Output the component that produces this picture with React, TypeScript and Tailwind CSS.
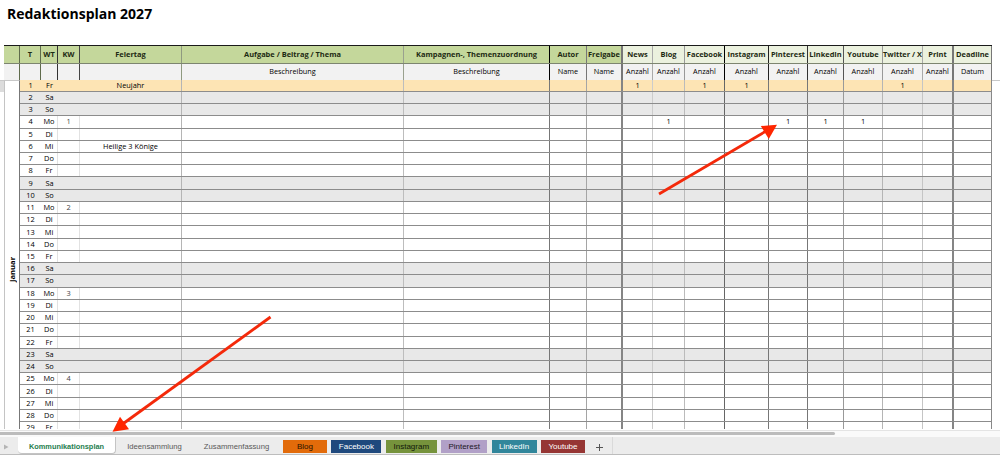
import clsx from 'clsx'

const COLS =
  'grid grid-cols-[16px_21px_17px_22px_102px_222px_146px_37px_36px_30px_32px_40px_44px_39px_36px_39px_40px_31px_38px]'
const DAY_COLS =
  'grid grid-cols-[21px_17px_22px_102px_222px_146px_37px_36px_30px_32px_40px_44px_39px_36px_39px_40px_31px_38px]'

const columns = [
  { title: '', sub: '', tone: 'green', head: 'border-r border-[#5f6b4c]', line: '' },
  { title: 'T', sub: '', tone: 'green', head: 'border-r border-[#5f6b4c]', line: '' },
  { title: 'WT', sub: '', tone: 'green', head: 'border-r border-[#333]', line: 'border-r border-[#e2e2e2]' },
  { title: 'KW', sub: '', tone: 'green', head: 'border-r border-[#444]', line: 'border-r border-[#e2e2e2]' },
  { title: 'Feiertag', sub: '', tone: 'green', head: 'border-r border-[#8f9a80]', line: 'border-r border-[#b5b5b5]' },
  { title: 'Aufgabe / Beitrag / Thema', sub: 'Beschreibung', tone: 'green', head: 'border-r border-[#9aa18f]', line: 'border-r border-[#bdbdbd]' },
  { title: 'Kampagnen-, Themenzuordnung', sub: 'Beschreibung', tone: 'green', head: 'border-r border-black', line: 'border-r border-[#777]' },
  { title: 'Autor', sub: 'Name', tone: 'green', head: 'border-r border-[#777]', line: 'border-r border-[#a5a5a5]' },
  { title: 'Freigabe', sub: 'Name', tone: 'green', head: 'border-r-2 border-[#777]', line: 'border-r-2 border-[#858585]' },
  { title: 'News', sub: 'Anzahl', tone: 'pale', head: 'border-r border-[#aaa]', line: 'border-r border-[#ccc]' },
  { title: 'Blog', sub: 'Anzahl', tone: 'pale', head: 'border-r border-[#999]', line: 'border-r border-[#bbb]' },
  { title: 'Facebook', sub: 'Anzahl', tone: 'pale', head: 'border-r border-black', line: 'border-r border-[#666]' },
  { title: 'Instagram', sub: 'Anzahl', tone: 'pale', head: 'border-r border-[#222]', line: 'border-r border-[#777]' },
  { title: 'Pinterest', sub: 'Anzahl', tone: 'pale', head: 'border-r border-[#333]', line: 'border-r border-[#777]' },
  { title: 'LinkedIn', sub: 'Anzahl', tone: 'pale', head: 'border-r border-[#555]', line: 'border-r border-[#999]' },
  { title: 'Youtube', sub: 'Anzahl', tone: 'pale', head: 'border-r border-[#999]', line: 'border-r border-[#b5b5b5]' },
  { title: 'Twitter / X', sub: 'Anzahl', tone: 'pale', head: 'border-r border-[#aaa]', line: 'border-r border-[#c5c5c5]' },
  { title: 'Print', sub: 'Anzahl', tone: 'pale', head: 'border-r-2 border-[#777]', line: 'border-r-2 border-[#858585]' },
  { title: 'Deadline', sub: 'Datum', tone: 'pale', head: 'border-r border-[#777]', line: 'border-r border-[#888]' },
]

const weekdays = ['Fr', 'Sa', 'So', 'Mo', 'Di', 'Mi', 'Do']

// Einträge pro Tag, Schlüssel = Spaltentitel
const entries: Record<number, Record<string, string>> = {
  1: { Feiertag: 'Neujahr', News: '1', Facebook: '1', Instagram: '1', 'Twitter / X': '1' },
  4: { Blog: '1', Pinterest: '1', LinkedIn: '1', Youtube: '1' },
  6: { Feiertag: 'Heilige 3 Könige' },
}

const days = Array.from({ length: 29 }, (_, i) => {
  const day = i + 1
  const wt = weekdays[i % 7]
  return {
    day,
    wt,
    kw: wt === 'Mo' ? String((day - 4) / 7 + 1) : '',
    weekend: wt === 'Sa' || wt === 'So',
    holiday: day === 1,
  }
})

const colorTabs = [
  { name: 'Blog', style: 'w-[44px] bg-[#e26b0a] text-[#2a1200]' },
  { name: 'Facebook', style: 'w-[50px] bg-[#1f497d] text-white' },
  { name: 'Instagram', style: 'w-[51px] bg-[#76933c] text-[#10180a]' },
  { name: 'Pinterest', style: 'w-[46px] bg-[#b1a0c7] text-[#1c1626]' },
  { name: 'LinkedIn', style: 'w-[45px] bg-[#31869b] text-white' },
  { name: 'Youtube', style: 'w-[44px] bg-[#963634] text-white' },
]

function HeaderRows() {
  return (
    <>
      <div className={clsx(COLS, 'h-[19px] border-t border-b border-t-[#1a1a1a] border-b-[#7d8570]')}>
        {columns.map((col, i) => (
          <div
            key={i}
            className={clsx(
              'flex items-center justify-center whitespace-nowrap font-bold text-[7.45px] text-[#1d2a12]',
              col.tone === 'green' ? 'bg-[#c4d79b]' : 'bg-[#ebf1de]',
              col.head
            )}
          >
            {col.title}
          </div>
        ))}
      </div>
      <div className={clsx(COLS, 'h-[15.6px] bg-[#f2f2f2]')}>
        {columns.map((col, i) => (
          <div key={i} className={clsx('flex items-center justify-center whitespace-nowrap text-[7.3px]', col.head)}>
            {col.sub}
          </div>
        ))}
      </div>
    </>
  )
}

function DayRow({ item }: { item: (typeof days)[number] }) {
  const filled = item.weekend || item.holiday
  return (
    <div
      className={clsx(
        DAY_COLS,
        'h-[12.24px] border-b border-[#8c8c8c]',
        item.holiday && 'bg-[#fde4b4]',
        item.weekend && 'bg-[#e8e8e8]'
      )}
    >
      {columns.slice(1).map((col) => {
        let text = entries[item.day]?.[col.title] ?? ''
        if (col.title === 'T') text = String(item.day)
        if (col.title === 'WT') text = item.wt
        if (col.title === 'KW') text = item.kw
        const hideLine = filled && (col.title === 'WT' || col.title === 'KW')
        return (
          <div
            key={col.title}
            className={clsx(
              'flex items-center justify-center whitespace-nowrap text-[7.4px] leading-[11px]',
              col.title === 'KW' && 'text-[#444]',
              !hideLine && col.line
            )}
          >
            {text}
          </div>
        )
      })}
    </div>
  )
}

function SheetTabs() {
  return (
    <div className="flex h-[18px] items-start border-b border-[#bdbdbd] bg-[#ececec] font-['Liberation_Sans',sans-serif] text-[8px]">
      <div className="flex h-[18px] w-[18px] items-center pt-px pl-1">
        <svg width="5" height="6" viewBox="0 0 5 6">
          <path d="M0 0.5L4.5 3L0 5.5Z" fill="#b4b4b4" />
        </svg>
      </div>
      <div className="flex h-[17px] w-[98px] items-center justify-center rounded-b-sm border-r border-b border-[#c4c4c4] bg-white pt-[3px] text-[7.4px] font-bold text-[#26804f]">
        Kommunikationsplan
      </div>
      <div className="flex h-[17px] w-[77px] items-center justify-center pt-[3px] text-[7.7px] text-[#595959]">
        Ideensammlung
      </div>
      <div className="flex h-[17px] w-[87px] items-center justify-center pt-[3px] text-[7.7px] text-[#595959]">
        Zusammenfassung
      </div>
      <div className="flex gap-[4.4px] pt-[3px] pl-[3px]">
        {colorTabs.map((tab) => (
          <div key={tab.name} className={clsx('flex h-[13px] items-center justify-center', tab.style)}>
            {tab.name}
          </div>
        ))}
      </div>
      <div className="flex h-[17px] w-[28px] items-center justify-center border-r border-[#dadada] pt-[3px] pl-[2px]">
        <svg width="7" height="7" viewBox="0 0 7 7">
          <path d="M3.5 0V7M0 3.5H7" stroke="#555" strokeWidth="1" />
        </svg>
      </div>
    </div>
  )
}

function Arrows() {
  return (
    <svg className="pointer-events-none absolute inset-0" width="1000" height="455" viewBox="0 0 1000 455">
      <g stroke="#f4290a" strokeWidth="2.8" fill="#ff2600">
        <path d="M659 194L767 130.500" />
        <path d="M777 124.800L760.800 126L768.800 139Z" stroke="none" />
        <path d="M270.500 317L122 424.500" />
        <path d="M112.500 431.800L120 416.800L129 429.200Z" stroke="none" />
      </g>
    </svg>
  )
}

export default function App() {
  return (
    <div className="relative h-[455px] w-[1000px] overflow-hidden bg-white font-['Open_Sans','Noto_Sans',sans-serif] text-black">
      <h1 className="h-[45px] pt-[3px] pl-[7px] text-[14px] leading-[21px] font-bold text-black">Redaktionsplan 2027</h1>

      <div className="h-[384px] overflow-hidden">
        <div className="ml-[4px] w-[988px]">
          <HeaderRows />
        </div>
        <div className="flex">
          <div className="w-[4px] border-t border-[#c8c8c8]">
            <div className="h-[11px] bg-[#dcdcdc]" />
          </div>
          <div className="flex h-[378px] w-[16px] justify-center border-t border-r border-l border-t-[#c8c8c8] border-r-[#777] border-l-[#c4c4c4] pt-[175px]">
            <span className="h-[26px] rotate-180 text-[7.6px] leading-[14px] font-bold text-black [writing-mode:vertical-rl]">
              Januar
            </span>
          </div>
          <div className="w-[972px]">
            {days.map((item) => (
              <DayRow key={item.day} item={item} />
            ))}
          </div>
          <div className="w-[8px] border-t border-[#c8c8c8]" />
        </div>
      </div>

      <div className="h-[8px] bg-white pt-px">
        <div className="h-[7px] border-t border-[#e4e4e4] bg-[#fafafa] pt-px">
          <div className="h-[3px] w-[835px] rounded-r-full bg-[#bcbcbc]" />
        </div>
      </div>
      <SheetTabs />
      <Arrows />
    </div>
  )
}
